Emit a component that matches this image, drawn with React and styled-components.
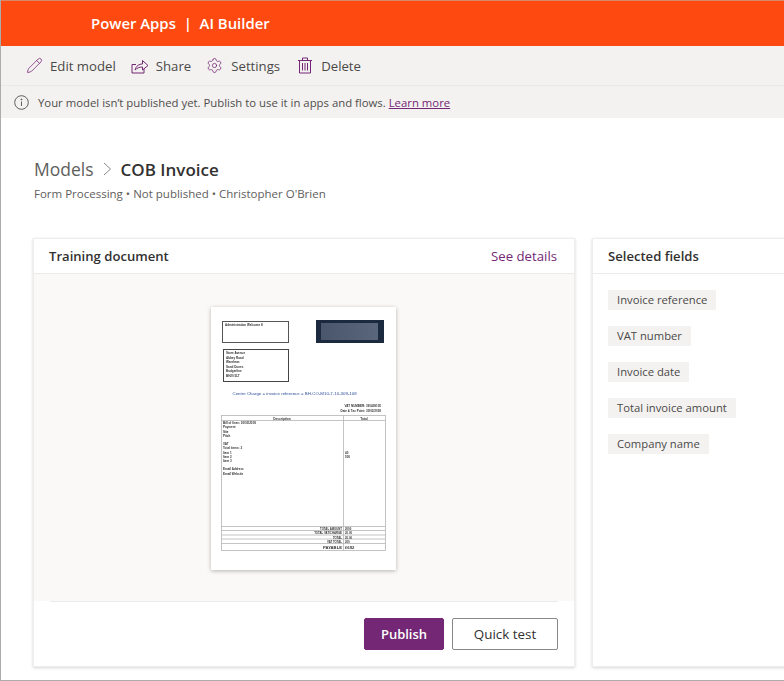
import React from 'react';
import styled, { createGlobalStyle } from 'styled-components';
import { Pencil, Settings } from 'lucide-react';

const Global = createGlobalStyle`
  html, body { margin: 0; padding: 0; background: #fff; }
  body { font-family: "Open Sans", "Noto Sans", sans-serif; color: #323130; }
`;

const Frame = styled.div`
  width: 784px;
  height: 681px;
  box-sizing: border-box;
  border-left: 1px solid #acacac;
  border-bottom: 1px solid #acacac;
  overflow: hidden;
  display: flex;
  flex-direction: column;
`;

const Header = styled.div`
  height: 46px;
  flex: none;
  background: #fe4a10;
  border-top: 1px solid #d9886c;
  box-sizing: border-box;
  display: flex;
  align-items: center;
  padding: 0 0 2px 90px;
  color: #fff;
  font-size: 14.9px;
  font-weight: 600;
  white-space: pre;
`;

const Toolbar = styled.div`
  height: 40px;
  flex: none;
  background: #f3f2f1;
  display: flex;
  align-items: center;
  padding-left: 25px;
  border-bottom: 1px solid #e9e8e7;
  box-sizing: border-box;
`;

const ToolButton = styled.div`
  display: flex;
  align-items: center;
  gap: ${(p) => p.$gap || 7}px;
  margin-right: ${(p) => p.$mr || 15}px;
  font-size: 13.2px;
  color: #4b4947;
  svg { flex: none; color: #742774; }
`;

const Notice = styled.div`
  height: 32px;
  flex: none;
  background: #f3f2f1;
  display: flex;
  align-items: center;
  padding-left: 13px;
  gap: 9px;
  font-size: 11.35px;
  color: #504e4c;
  a { color: #742774; text-decoration: underline; }
`;

const Main = styled.div`
  flex: 1;
  min-height: 0;
  padding: 37px 0 0 32px;
`;

const Crumbs = styled.div`
  display: flex;
  align-items: center;
  height: 28px;
  margin-left: 1px;
  font-size: 17.5px;
  color: #605e5c;
  b { font-weight: 600; font-size: 17px; color: #323130; }
  svg { margin: 0 9px; color: #8a8886; }
`;

const Meta = styled.div`
  margin: 3px 0 0 1px;
  font-size: 11.5px;
  color: #605e5c;
  height: 16px;
  line-height: 16px;
`;

const Cards = styled.div`
  margin-top: 36px;
  display: flex;
  gap: 17px;
  align-items: flex-start;
`;

const Card = styled.div`
  flex: none;
  width: ${(p) => p.$w}px;
  height: 429px;
  background: #fff;
  border: 1px solid #eeedec;
  box-sizing: border-box;
  box-shadow: 0 1px 3px rgba(0, 0, 0, 0.16);
  display: flex;
  flex-direction: column;
`;

const CardHead = styled.div`
  height: 35px;
  flex: none;
  box-sizing: border-box;
  border-bottom: 1px solid #edebe9;
  display: flex;
  align-items: center;
  justify-content: space-between;
  padding: 0 17px 0 15px;
  font-size: 13.1px;
  font-weight: 600;
  color: #323130;
  a { font-weight: 400; font-size: 13.2px; color: #742774; }
`;

const Preview = styled.div`
  height: 327px;
  flex: none;
  background: #faf9f8;
  display: flex;
  justify-content: center;
  padding: 33px 2px 0 0;
  box-sizing: border-box;
`;

const Page = styled.div`
  width: 185px;
  height: 263px;
  background: #fff;
  box-shadow: 0 1px 4px rgba(0, 0, 0, 0.28);
  svg { display: block; filter: blur(0.3px); }
`;

const Footer = styled.div`
  flex: 1;
  margin: 0 16px;
  border-top: 1px solid #edebe9;
  display: flex;
  justify-content: flex-end;
  align-items: flex-start;
  gap: 8px;
  padding-top: 16px;
`;

const Button = styled.div`
  height: 32px;
  width: ${(p) => p.$w}px;
  box-sizing: border-box;
  border-radius: 2px;
  display: flex;
  align-items: center;
  justify-content: center;
  font-size: ${(p) => (p.$primary ? 13 : 13.4)}px;
  font-weight: ${(p) => (p.$primary ? 600 : 400)};
  color: ${(p) => (p.$primary ? '#fff' : '#323130')};
  background: ${(p) => (p.$primary ? '#742774' : '#fff')};
  border: 1px solid ${(p) => (p.$primary ? '#742774' : '#8a8886')};
`;

const Fields = styled.div`
  display: flex;
  flex-direction: column;
  align-items: flex-start;
  gap: 16px;
  padding: 16px 0 0 15px;
`;

const Chip = styled.div`
  height: 20px;
  padding: 0 9px;
  background: #f3f2f1;
  font-size: 11.25px;
  line-height: 20px;
  color: #4b4947;
  white-space: nowrap;
`;

const ShareIcon = () => (
  <svg width="18" height="16" viewBox="0 0 18 16" fill="none" stroke="currentColor" strokeWidth="1">
    <path d="M1 6.5V15H13V11" />
    <path d="M1 6.5H5" />
    <path d="M4 12C5 8 8 6 11.5 6V2.5L17 7.5L11.5 12V9C8.5 9 6 10 4 12Z" />
  </svg>
);

const TrashIcon = () => (
  <svg width="14" height="17" viewBox="0 0 14 17" fill="none" stroke="currentColor" strokeWidth="1">
    <path d="M0 3.5H14" />
    <path d="M4.5 3.5V1H9.5V3.5" />
    <path d="M1.5 3.5V16H12.5V3.5" />
    <path d="M4.5 6V13.5M7 6V13.5M9.5 6V13.5" />
  </svg>
);

const InfoIcon = () => (
  <svg width="15" height="15" viewBox="0 0 15 15" fill="none" stroke="#605e5c" strokeWidth="1">
    <circle cx="7.5" cy="7.5" r="6.8" />
    <path d="M7.5 6.5V11" />
    <circle cx="7.5" cy="4.4" r="0.5" fill="#605e5c" />
  </svg>
);

const ChevronIcon = () => (
  <svg width="9" height="14" viewBox="0 0 9 14" fill="none" stroke="currentColor" strokeWidth="1">
    <path d="M1 1L7.5 7L1 13" />
  </svg>
);

// thumbnail of the invoice, page coords start at 211,307 in the reference
const leftLines = [
  ['Bill of lines: 30/03/2018', 116.7],
  ['Payment', 121],
  ['Site', 125.7],
  ['Pitch', 130],
  ['VAT', 138],
  ['Total items: 3', 142],
  ['Item 1', 147],
  ['Item 2', 151],
  ['Item 3', 155],
  ['Email Address', 163],
  ['Email Website', 168],
];

const totals = [
  ['TOTAL AMOUNT', '2000', 223],
  ['TOTAL VAT/CHARGE', '20.00', 227],
  ['TOTAL', '20.00', 231.5],
  ['VAT TOTAL', '200', 236],
];

const Invoice = () => (
  <svg width="185" height="263" viewBox="0 0 185 263" fontFamily="Liberation Sans, sans-serif" fontSize="3.2" fill="#333">
    <defs>
      <linearGradient id="logoFill" x1="0" y1="0" x2="1" y2="0">
        <stop offset="0" stopColor="#4a566c" />
        <stop offset="1" stopColor="#5a667c" />
      </linearGradient>
    </defs>
    <rect x="11.5" y="14.5" width="66" height="21" fill="#fff" stroke="#555" />
    <text x="14" y="18.5" fontWeight="700" fontSize="3">Administration Welcome 8</text>
    <rect x="105" y="13" width="68" height="23" fill="#1b2a3f" />
    <rect x="110" y="16" width="57" height="17" fill="url(#logoFill)" />
    <rect x="12.5" y="42.5" width="65" height="32" fill="#fff" stroke="#444" />
    {['Store Avenue', 'Abbey Road', 'Wareham', 'Sand Dunes', 'Budgerline', 'BH20 5LT'].map((t, i) => (
      <text key={t} x="15" y={47 + i * 4.6} fontWeight="700" fontSize="3">{t}</text>
    ))}
    <text x="21.5" y="88" fill="#2f4f9a" fontSize="4.4">Centre Charge = invoice reference = BH-CO-M10-7-10-309-108</text>
    <text x="170" y="100" textAnchor="end" fontWeight="700" fontSize="3">VAT NUMBER: 391409105</text>
    <text x="170" y="104.5" textAnchor="end" fontWeight="700" fontSize="3">Date &amp; Tax Point: 30/03/2018</text>
    <g fill="none" stroke="#b5b5b5" strokeWidth="0.8">
      <rect x="10.5" y="108.5" width="164" height="135" />
      <path d="M10.5 113.5H174.5M132.5 108.5V243.5" />
      <path d="M10.5 219.5H174.5M10.5 223.5H174.5M10.5 228H174.5M10.5 232H174.5M10.5 236.5H174.5" />
    </g>
    <text x="71" y="112.6" textAnchor="middle" fontWeight="700">Description</text>
    <text x="153" y="112.6" textAnchor="middle" fontWeight="700">Total</text>
    {leftLines.map(([t, y]) => (
      <text key={t} x="12" y={y} fontWeight="700" fontSize="3">{t}</text>
    ))}
    <text x="134" y="147" fontSize="3" fontWeight="700">40</text>
    <text x="134" y="151" fontSize="3" fontWeight="700">500</text>
    {totals.map(([label, value, y]) => (
      <g key={label} fontSize="2.8" fontWeight="700">
        <text x="131" y={y} textAnchor="end">{label}</text>
        <text x="134" y={y}>{value}</text>
      </g>
    ))}
    <text x="131" y="242" textAnchor="end" fontSize="4.2" fontWeight="700">PAYABLE</text>
    <text x="134" y="242" fontSize="4.2" fontWeight="700">£692</text>
  </svg>
);

const fieldNames = ['Invoice reference', 'VAT number', 'Invoice date', 'Total invoice amount', 'Company name'];

export default function App() {
  return (
    <Frame>
      <Global />
      <Header>Power Apps  |  AI Builder</Header>
      <Toolbar>
        <ToolButton $gap={7}><Pencil size={17} strokeWidth={1.1} />Edit model</ToolButton>
        <ToolButton $gap={7}><ShareIcon />Share</ToolButton>
        <ToolButton $gap={8} $mr={18}><Settings size={17} strokeWidth={1.1} />Settings</ToolButton>
        <ToolButton $gap={9}><TrashIcon />Delete</ToolButton>
      </Toolbar>
      <Notice>
        <InfoIcon />
        <span>Your model isn’t published yet. Publish to use it in apps and flows. <a>Learn more</a></span>
      </Notice>
      <Main>
        <Crumbs>Models<ChevronIcon /><b>COB Invoice</b></Crumbs>
        <Meta>Form Processing • Not published • Christopher O'Brien</Meta>
        <Cards>
          <Card $w={542}>
            <CardHead>Training document<a>See details</a></CardHead>
            <Preview><Page><Invoice /></Page></Preview>
            <Footer>
              <Button $primary $w={80}>Publish</Button>
              <Button $w={106}>Quick test</Button>
            </Footer>
          </Card>
          <Card $w={300}>
            <CardHead>Selected fields</CardHead>
            <Fields>
              {fieldNames.map((f) => <Chip key={f}>{f}</Chip>)}
            </Fields>
          </Card>
        </Cards>
      </Main>
    </Frame>
  );
}
